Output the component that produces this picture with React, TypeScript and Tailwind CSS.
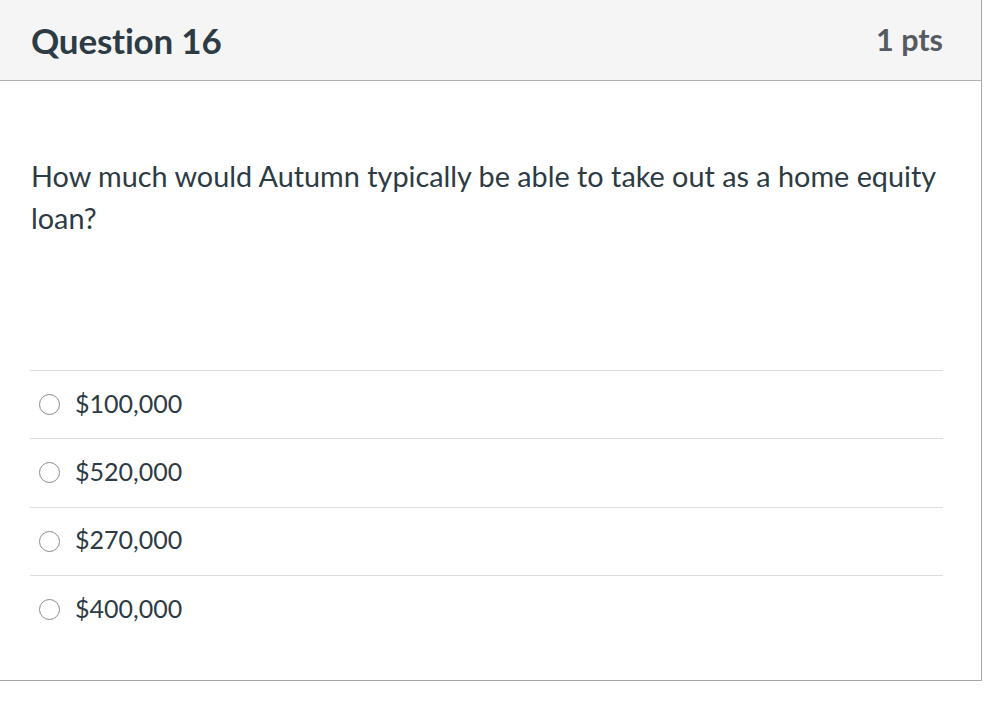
import React from "react";

const answers = ["$100,000", "$520,000", "$270,000", "$400,000"];

function Radio() {
  return (
    <span className="inline-block w-[21px] h-[21px] rounded-full border-[1.5px] border-[#8a8a8a] bg-white shrink-0" />
  );
}

export default function App() {
  return (
    <div
      className="w-[998px] h-[702px] bg-white text-[#2d3b45]"
      style={{ fontFamily: "Lato, 'Noto Sans', sans-serif" }}
    >
      <div className="w-[982px] border-r border-b border-[#a5a5a5]">
        <div className="h-[81px] bg-[#f5f5f5] border-b border-[#b0b0b0] flex items-center justify-between pl-[31px] pr-[38px]">
          <h2 className="text-[35px] font-bold tracking-[-0.2px]">Question 16</h2>
          <div className="text-[30.5px] font-bold text-[#555b60]">1 pts</div>
        </div>
        <div className="px-[30px] pt-[74px] pb-[37px]">
          <p className="text-[28.8px] leading-[42px] pl-[1px] pr-[4px]">
            How much would Autumn typically be able to take out as a home equity loan?
          </p>
          <div className="mt-[131px] mr-[8px]">
            {answers.map((a) => (
              <label
                key={a}
                className="h-[68.3px] border-t border-[#dedede] flex items-center gap-[15px] pl-[9px]"
              >
                <Radio />
                <span className="text-[25px] -translate-y-[1px]">{a}</span>
              </label>
            ))}
          </div>
        </div>
      </div>
    </div>
  );
}
